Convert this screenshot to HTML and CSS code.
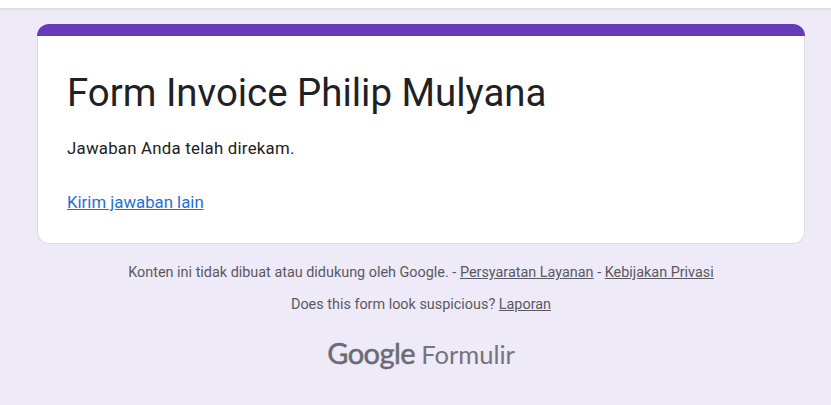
FILE: index.html
```html
<!DOCTYPE html>
<html lang="id">
<head>
<meta charset="utf-8">
<title>Form Invoice Philip Mulyana</title>
<link rel="stylesheet" href="styles.css">
</head>
<body>
<div class="topbar"></div>
<main class="page">
  <section class="card">
    <div class="band"></div>
    <div class="content">
      <h1 class="title">Form Invoice Philip Mulyana</h1>
      <p class="message">Jawaban Anda telah direkam.</p>
      <a class="again" href="#">Kirim jawaban lain</a>
    </div>
  </section>
  <footer class="footer">
    <p class="line">Konten ini tidak dibuat atau didukung oleh Google. - <a href="#">Persyaratan Layanan</a> - <a href="#">Kebijakan Privasi</a></p>
    <p class="line second">Does this form look suspicious? <a href="#">Laporan</a></p>
    <div class="brand"><span class="google">Google</span><span class="forms">Formulir</span></div>
  </footer>
</main>
</body>
</html>
```
FILE: styles.css
```css
* { box-sizing: border-box; }
html, body { margin: 0; height: 100%; overflow: hidden; }
body { background: #fff; font-family: Roboto, "Liberation Sans", sans-serif; color: #202124; }
.topbar { height: 10px; border-bottom: 2px solid #e0e0e0; background: #fff; }
.page { background: #eeeaf8; height: 395px; padding: 14px 0 0 11px; display: flex; flex-direction: column; align-items: center; }
.card { width: 768px; height: 220px; flex: none; display: flex; flex-direction: column; }
.band { height: 12px; flex: none; background: #673ab7; border-radius: 12px 12px 0 0; }
.content { flex: 1; padding: 33px 29px 0; background: #fff; border: 1px solid #dadce0; border-top: 0; border-radius: 0 0 12px 12px; }
.title { margin: 0; font-size: 38.4px; font-weight: 400; line-height: 48px; }
.message { margin: 19px 0 0; font-size: 16.8px; line-height: 24px; letter-spacing: .25px; }
.again { display: block; margin-top: 30px; font-size: 16.8px; line-height: 24px; color: #1f6fd6; }
.footer { width: 768px; text-align: center; font-size: 14.4px; padding-top: 19px; }
.line { margin: 0; line-height: 20px; color: #5b5862; }
.line a { color: inherit; }
.second { margin-top: 12px; }
.brand { margin-top: 20px; display: flex; justify-content: center; align-items: baseline; color: #6c6a72; }
.google { font-family: Lato, sans-serif; font-size: 29px; line-height: 36px; letter-spacing: -.5px; font-weight: 400; -webkit-text-stroke: .5px #6c6a72; }
.forms { font-family: Lato, sans-serif; font-size: 25.5px; line-height: 36px; margin-left: 6px; color: #75737b; }
```
